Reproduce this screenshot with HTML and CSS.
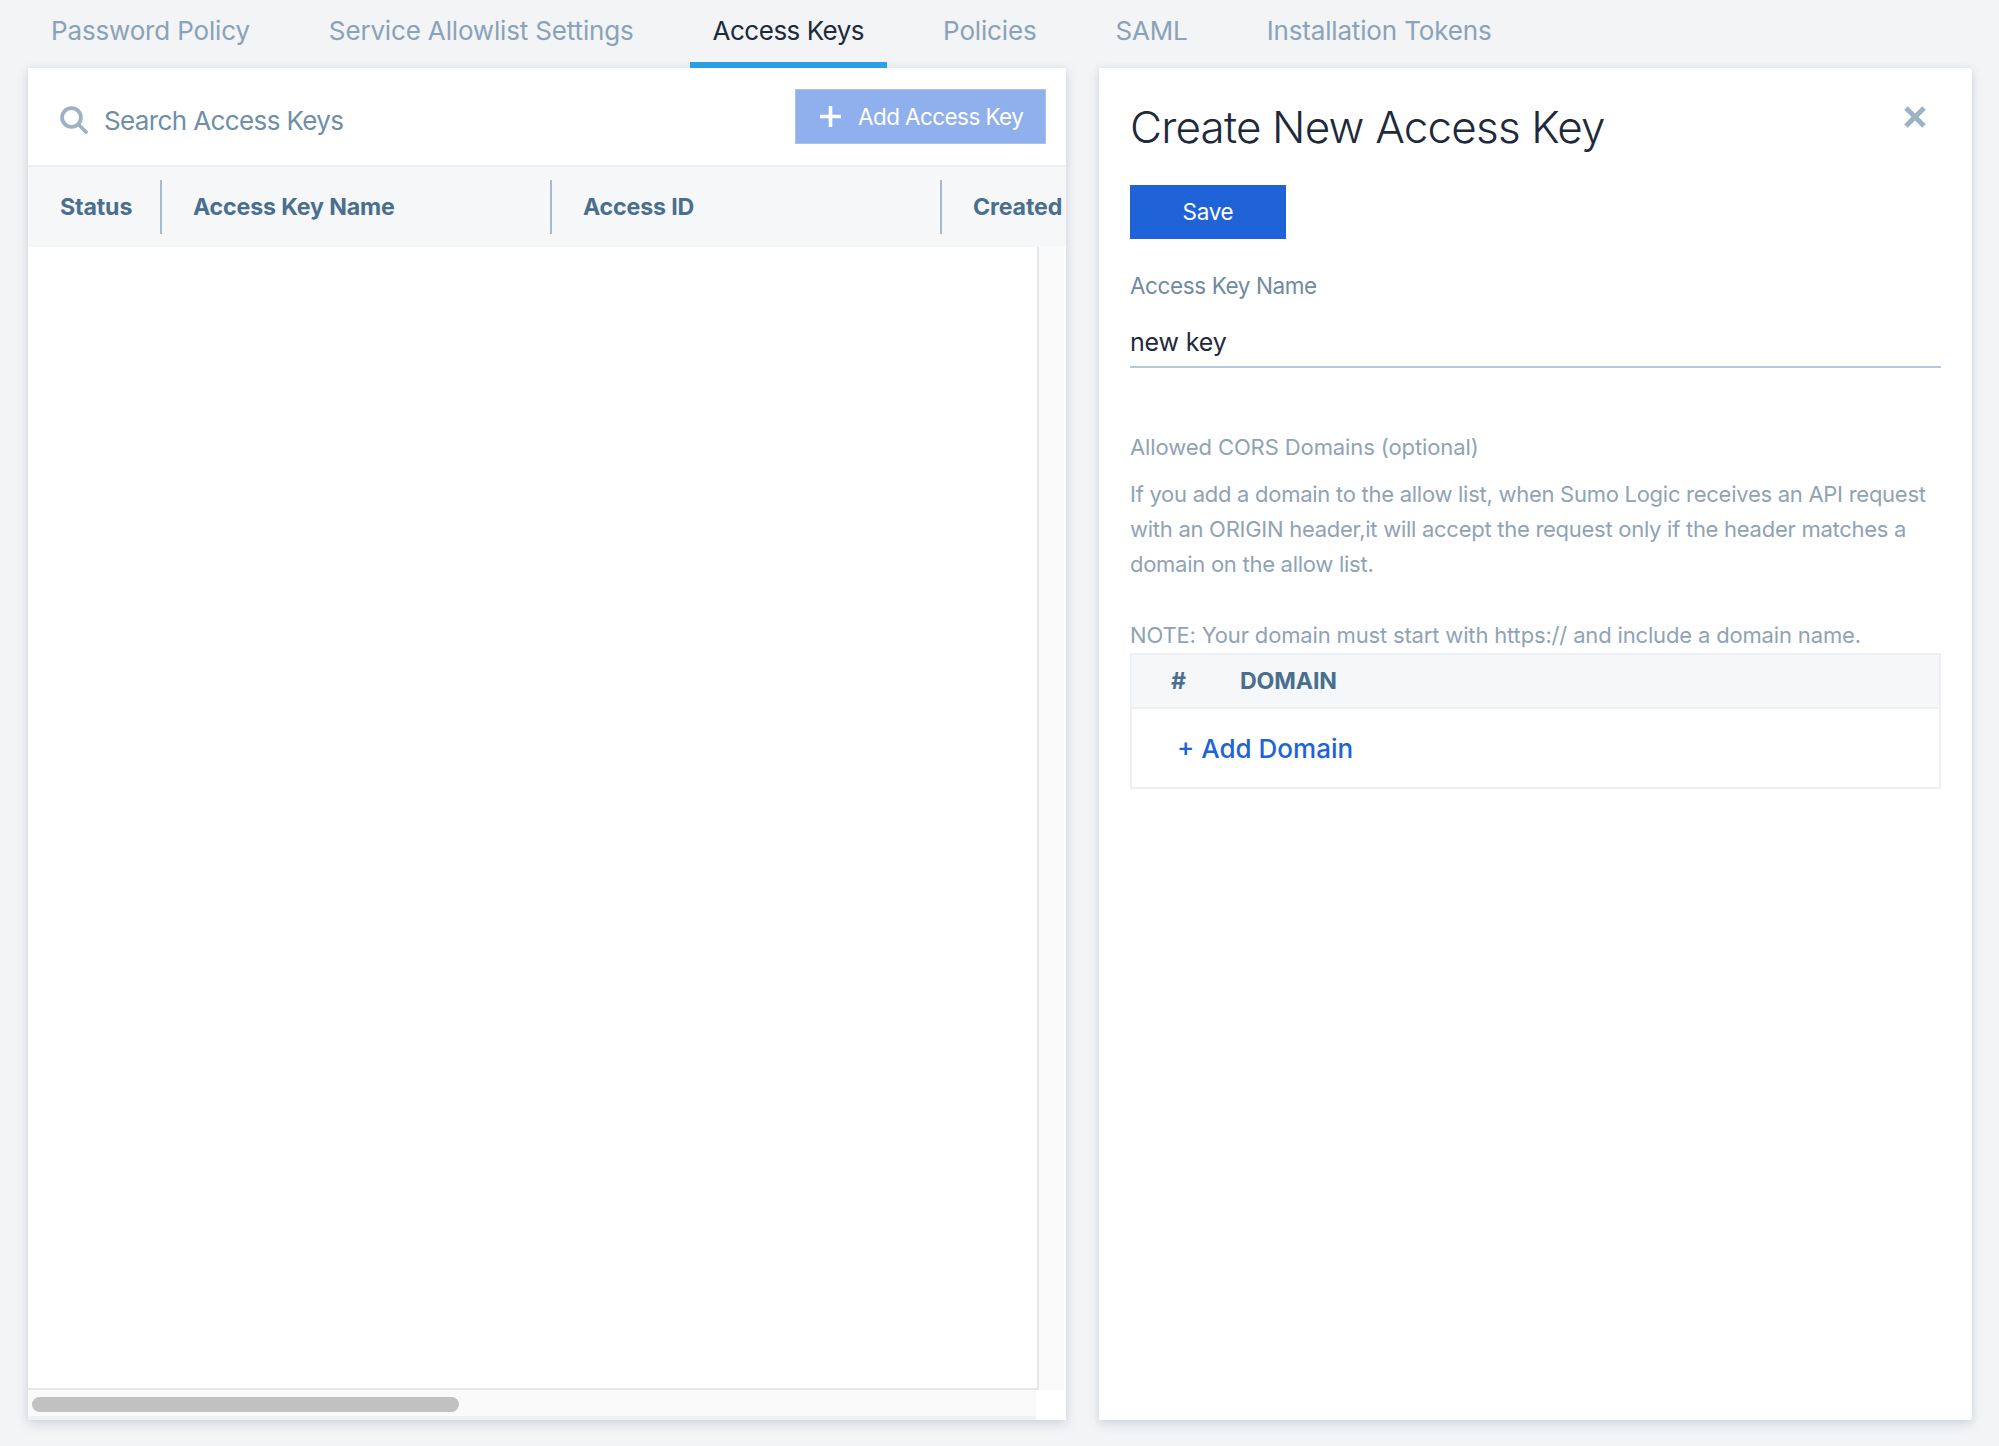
FILE: index.html
```html
<!DOCTYPE html>
<html lang="en">
<head>
<meta charset="utf-8">
<title>Access Keys</title>
<link rel="stylesheet" href="styles.css">
</head>
<body>
<nav class="tabs">
  <a class="tab">Password Policy</a>
  <a class="tab">Service Allowlist Settings</a>
  <a class="tab active">Access Keys</a>
  <a class="tab">Policies</a>
  <a class="tab">SAML</a>
  <a class="tab">Installation Tokens</a>
</nav>
<main class="main">
  <section class="list-panel">
    <div class="toolbar">
      <div class="search">
        <svg class="search-icon" viewBox="0 0 28 28" width="28" height="28" fill="none" stroke="#9db2c5" stroke-width="3.8" stroke-linecap="round"><circle cx="11.5" cy="11.5" r="9.4"/><path d="M19 19l7 7"/></svg>
        <span>Search Access Keys</span>
      </div>
      <button class="add-btn">
        <svg viewBox="0 0 21 21" width="21" height="21" fill="none" stroke="#fff" stroke-width="3.6"><path d="M10.5 0v21M0 10.5h21"/></svg>
        <span>Add Access Key</span>
      </button>
    </div>
    <div class="col-head">
      <div class="col col-status">Status</div>
      <div class="col col-name">Access Key Name</div>
      <div class="col col-id">Access ID</div>
      <div class="col col-created">Created</div>
    </div>
    <div class="list-body">
      <div class="rows"></div>
      <div class="vscroll"></div>
    </div>
    <div class="hscroll-row">
      <div class="hscroll"><div class="thumb"></div></div>
      <div class="corner"></div>
    </div>
  </section>
  <section class="form-panel">
    <div class="form-head">
      <h1>Create New Access Key</h1>
      <svg class="close" viewBox="0 0 22 22" width="22" height="22" fill="none" stroke="#9db2c5" stroke-width="5"><path d="M2 2l18 18M20 2L2 20"/></svg>
    </div>
    <button class="save">Save</button>
    <label class="field-label">Access Key Name</label>
    <div class="field-value">new key</div>
    <div class="cors-label">Allowed CORS Domains (optional)</div>
    <p class="help">If you add a domain to the allow list, when Sumo Logic receives an API request with an ORIGIN header,it will accept the request only if the header matches a domain on the allow list.</p>
    <p class="note">NOTE: Your domain must start with https:// and include a domain name.</p>
    <div class="domains">
      <div class="domains-head"><span class="hash">#</span><span>DOMAIN</span></div>
      <div class="domains-body"><a class="add-domain">+ Add Domain</a></div>
    </div>
  </section>
</main>
</body>
</html>
```
FILE: styles.css
```css
* { box-sizing: border-box; }
html, body { margin: 0; height: 100%; }
body {
  background: #f2f4f6;
  font-family: "Inter", "Liberation Sans", sans-serif;
  letter-spacing: -0.01em;
  color: #1e2a3c;
  overflow: hidden;
}
.tabs { display: flex; gap: 33px; height: 68px; padding-left: 28px; }
.tab {
  padding: 12px 23px 0;
  font-size: 26px;
  line-height: 38px;
  letter-spacing: -0.16px;
  color: #8ba2b8;
  border-bottom: 6px solid transparent;
}
.tab.active { color: #1e2a3c; border-bottom-color: #2aa3e6; letter-spacing: -0.5px; }
.main { display: flex; gap: 33px; padding: 0 27px 0 28px; height: 1352px; }
.list-panel, .form-panel {
  background: #fff;
  box-shadow: 0 4px 10px rgba(120, 135, 150, 0.26), 0 -1px 6px rgba(120, 135, 150, 0.08);
}
.list-panel { width: 1038px; display: flex; flex-direction: column; }
.toolbar {
  height: 99px;
  display: flex;
  justify-content: space-between;
  padding: 21px 20px 0 32px;
  border-bottom: 2px solid #eef0f4;
}
.search { display: flex; align-items: center; gap: 16px; height: 56px; font-size: 26px; letter-spacing: -0.62px; color: #6f8ea8; padding-top: 6px; }
.add-btn {
  width: 251px;
  height: 55px;
  display: flex;
  align-items: center;
  gap: 17px;
  padding: 0 0 0 24px;
  background: #8fb0ec;
  border: 1px solid #a9c3f1;
  color: #fff;
  font: 400 22.5px "Inter", sans-serif;
  letter-spacing: -0.58px;
}
.col-head { height: 80px; display: flex; align-items: center; background: #f5f7f9; }
.col {
  height: 54px;
  line-height: 54px;
  padding-left: 31px;
  border-right: 2px solid #a5bbcf;
  font-size: 23.2px;
  font-weight: 700;
  color: #4a6f8e;
  white-space: nowrap;
}
.col-status { width: 134px; padding-left: 32px; }
.col-name, .col-id { width: 390px; }
.col-created { flex: 1; border-right: 0; overflow: hidden; }
.list-body { flex: 1; display: flex; min-height: 0; }
.rows { width: 1009px; border-bottom: 2px solid #e6e6e6; }
.vscroll { width: 27px; background: #fafafa; border-left: 2px solid #e6e6e6; }
.hscroll-row { height: 30px; display: flex; }
.hscroll { width: 1008px; height: 26px; padding: 7px 0 0 4px; background: #fafafa; box-shadow: 0 4px 0 #eef0f2; }
.thumb { width: 427px; height: 15px; border-radius: 8px; background: #c1c1c1; }
.corner { flex: 1; }
.form-panel { width: 873px; padding: 0 31px; border-radius: 0 3px 3px 0; }
.form-head { display: flex; justify-content: space-between; height: 117px; padding-top: 28px; }
h1 { margin: 0; font-size: 44px; line-height: 62px; font-weight: 300; letter-spacing: -0.82px; color: #1e2a3c; }
.close { margin: 10px 15px 0 0; }
.save {
  display: block;
  width: 156px;
  height: 54px;
  padding-bottom: 2px;
  background: #2063d9;
  border: 0;
  color: #fff;
  font: 400 22.5px "Inter", sans-serif;
  letter-spacing: -0.3px;
}
.field-label { display: block; margin-top: 31px; font-size: 22.5px; line-height: 32px; letter-spacing: -0.4px; color: #6f8aa3; }
.field-value {
  height: 66px;
  width: 811px;
  padding-top: 22px;
  font-size: 25px;
  line-height: 36px;
  color: #1e2a3c;
  border-bottom: 2px solid #b7c8d6;
}
.cors-label { margin-top: 63px; font-size: 22px; line-height: 32px; letter-spacing: -0.1px; color: #8fa3b5; }
.help { margin: 14px 0 0; width: 811px; font-size: 22px; line-height: 35px; letter-spacing: -0.27px; color: #8fa3b5; }
.note { margin: 36px 0 0; font-size: 22px; line-height: 35px; color: #8fa3b5; }
.domains { width: 811px; margin-top: 0; border: 2px solid #eef1f4; }
.domains-head {
  height: 54px;
  display: flex;
  align-items: center;
  background: #f5f7f9;
  border-bottom: 2px solid #eef1f4;
  font-size: 23.2px;
  font-weight: 700;
  color: #4a6f8e;
}
.hash { width: 108px; padding-left: 39px; }
.domains-body { height: 78px; display: flex; align-items: center; padding-left: 45px; }
.add-domain { font-size: 26px; color: #2063d9; font-weight: 500; letter-spacing: 0; }
```
